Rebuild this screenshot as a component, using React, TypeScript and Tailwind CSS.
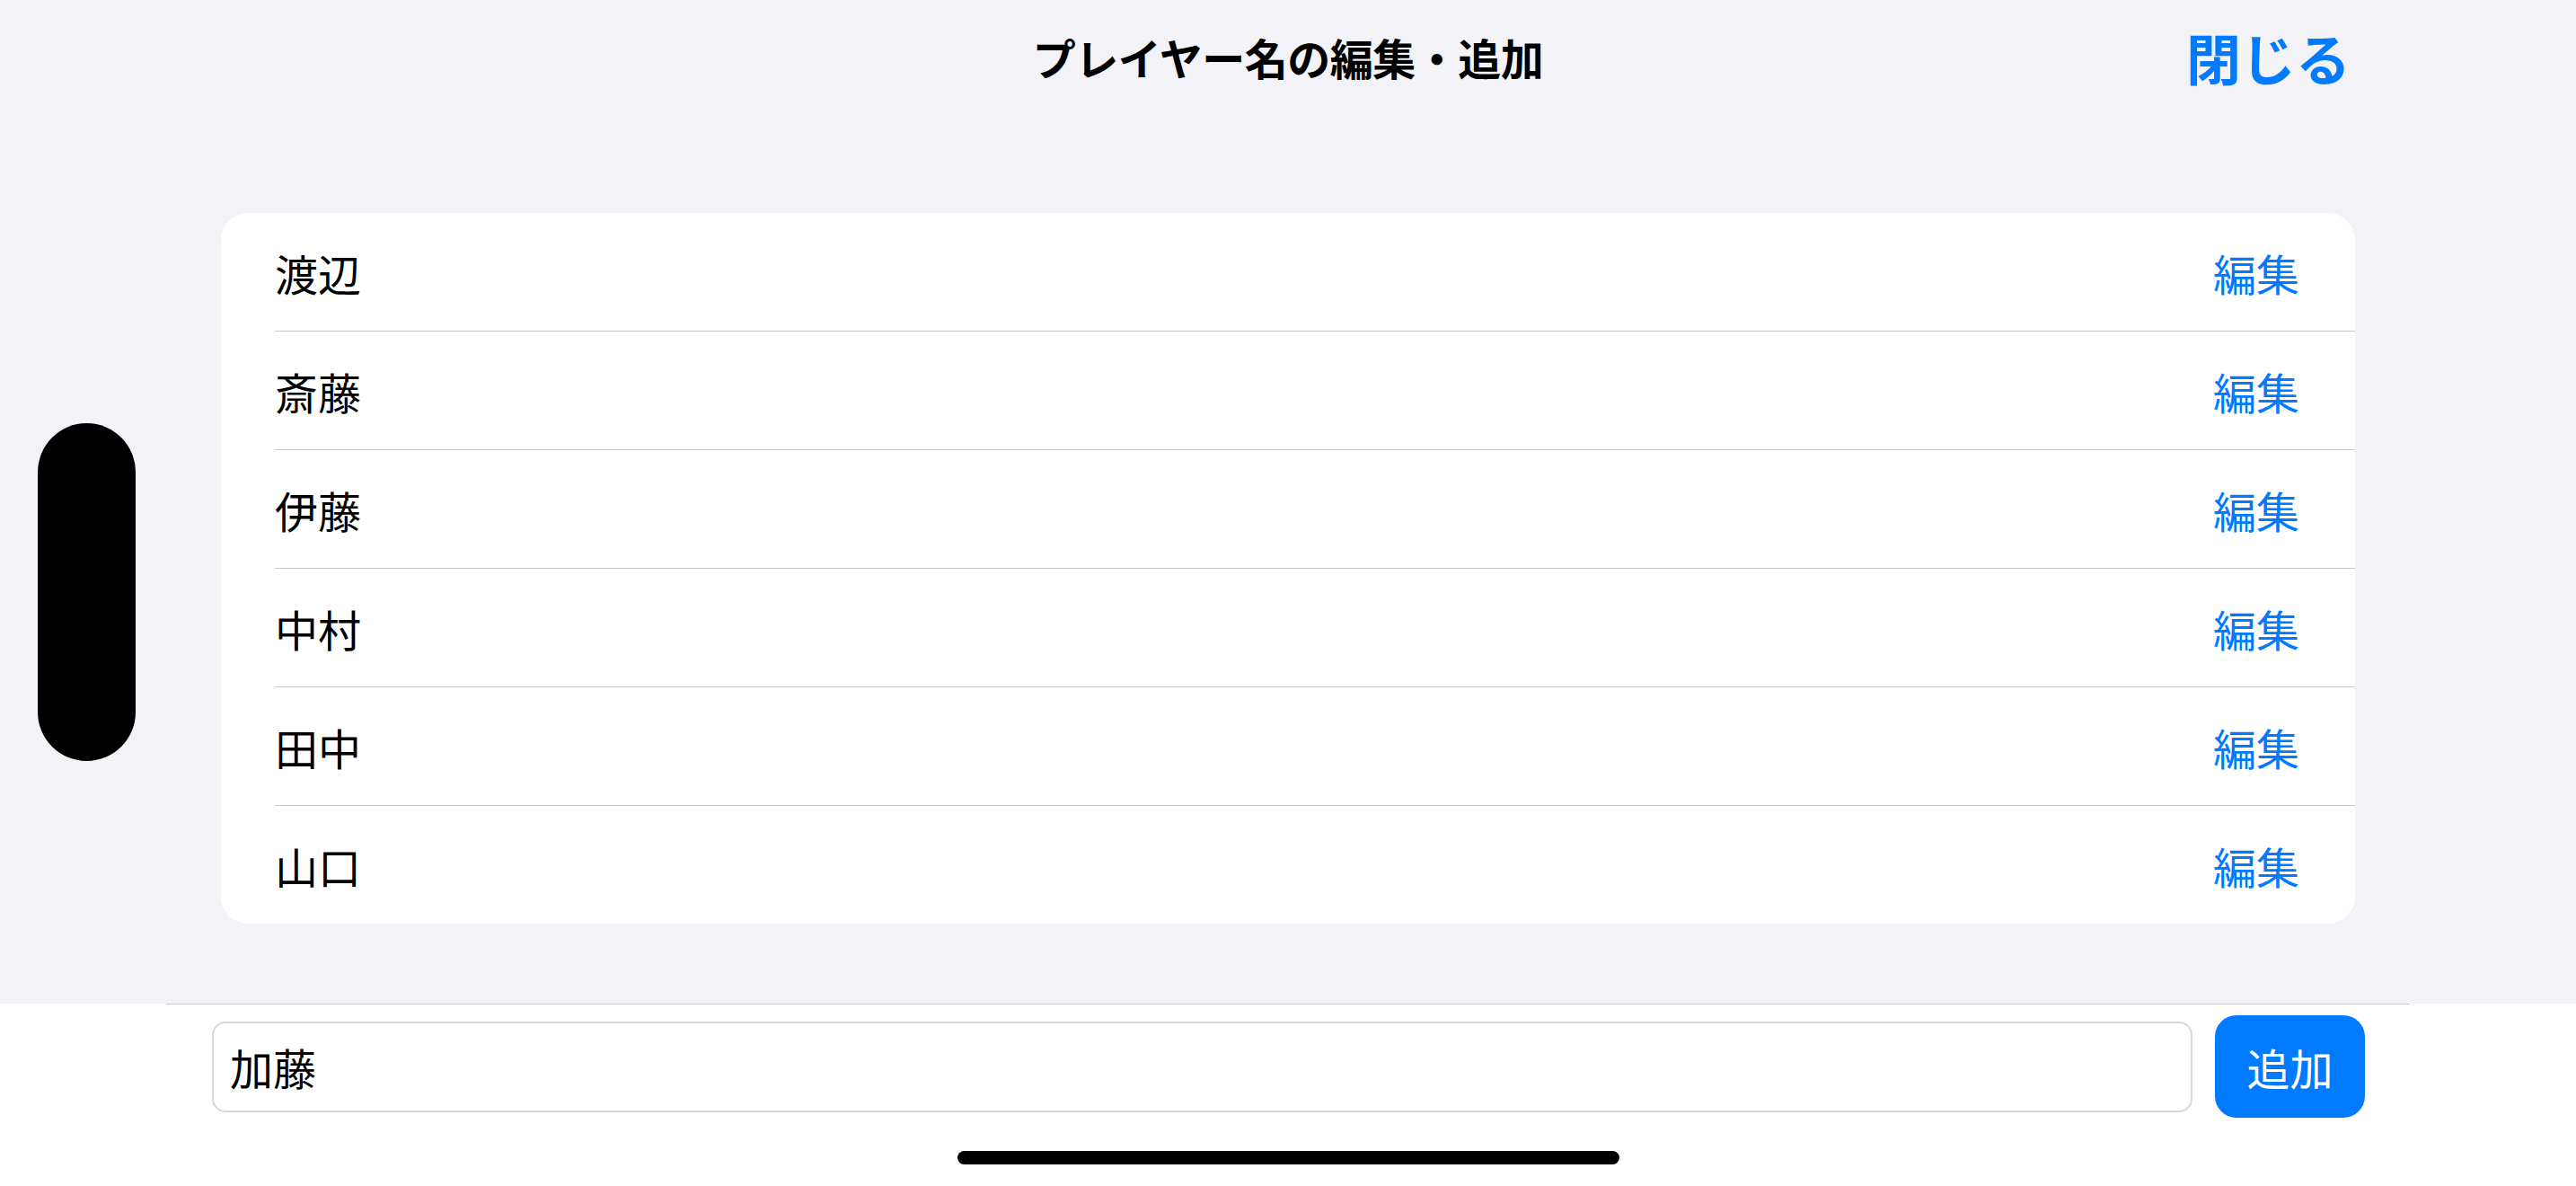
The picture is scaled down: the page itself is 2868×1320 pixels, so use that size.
import React from "react";

const names = ["渡辺", "斎藤", "伊藤", "中村", "田中", "山口"];

export default function App() {
  return (
    <div
      className="relative w-[2868px] h-[1320px] overflow-hidden bg-[#f2f2f7] flex flex-col text-black"
      style={{ fontFamily: '"Noto Sans CJK JP", "Noto Sans", sans-serif' }}
    >
      {/* Header */}
      <div className="grid grid-cols-[1fr_auto_1fr] items-center h-[126px] shrink-0">
        <div />
        <div className="text-[48px] leading-none font-bold tracking-[-0.5px]">プレイヤー名の編集・追加</div>
        <div className="flex justify-end pr-[251px]">
          <span className="text-[61px] leading-none font-bold text-[#007aff]">閉じる</span>
        </div>
      </div>

      {/* List card */}
      <div className="mt-[111px] mx-[246px] bg-white rounded-[30px] overflow-hidden shrink-0">
        {names.map((n, i) => (
          <div key={n} className="pl-[60px]">
            <div
              className={`flex items-center justify-between pr-[62px] ${
                i < names.length - 1 ? "h-[132px] border-b border-[#c8c8cc]" : "h-[131px]"
              }`}
            >
              <span className="text-[48px] leading-none">{n}</span>
              <span className="text-[48px] leading-none text-[#007aff]">編集</span>
            </div>
          </div>
        ))}
      </div>

      <div className="h-[89px] shrink-0" />

      {/* Bottom bar */}
      <div className="flex-1 bg-white flex flex-col">
        <div className="mx-[185px] border-t border-[#c8c8cc]" />
        <div className="flex items-center gap-[25px] pl-[236px] pr-[235px] pt-[12px]">
          <div className="flex-1 h-[101px] rounded-[15px] border-2 border-[#d6d6da] bg-white flex items-center pl-[18px]">
            <span className="text-[48px] leading-none">加藤</span>
          </div>
          <button className="w-[167px] h-[114px] rounded-[24px] bg-[#007aff] text-white text-[48px] leading-none flex items-center justify-center">
            追加
          </button>
        </div>
        <div className="mt-[37px] mx-auto w-[737px] h-[15px] rounded-full bg-black" />
      </div>

      {/* Dynamic Island (landscape) */}
      <div className="absolute left-[42px] top-[471px] w-[109px] h-[376px] rounded-full bg-black" />
    </div>
  );
}
